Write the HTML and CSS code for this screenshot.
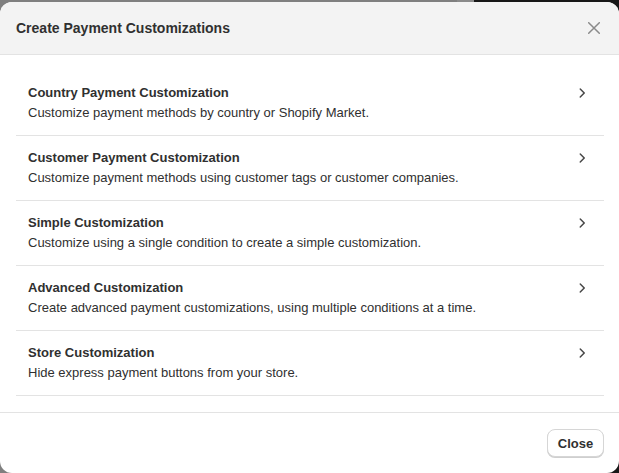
FILE: index.html
```html
<!DOCTYPE html>
<html>
<head>
<meta charset="utf-8">
<link rel="stylesheet" href="styles.css">
</head>
<body>
<div class="modal">
  <div class="modal-header">
    <h2 class="modal-title">Create Payment Customizations</h2>
    <button class="icon-btn" aria-label="Close">
      <svg width="12" height="12" viewBox="0 0 12 12"><path d="M0.7 0.7L11.3 11.3M11.3 0.7L0.7 11.3" stroke="#8a8a8a" stroke-width="1.5" stroke-linecap="round" fill="none"/></svg>
    </button>
  </div>
  <div class="modal-body">
    <ul class="options">
      <li class="option">
        <div class="option-text">
          <div class="option-title">Country Payment Customization</div>
          <div class="option-desc">Customize payment methods by country or Shopify Market.</div>
        </div>
        <svg class="chev" width="20" height="20" viewBox="0 0 20 20"><path d="M7.72 14.53a.75.75 0 0 1 0-1.06l3.47-3.47-3.47-3.470a.75.75 0 0 1 1.06-1.06l4 4a.75.75 0 0 1 0 1.06l-4 4a.75.75 0 0 1-1.06 0Z" fill="#4a4a4a"/></svg>
      </li>
      <li class="option">
        <div class="option-text">
          <div class="option-title">Customer Payment Customization</div>
          <div class="option-desc">Customize payment methods using customer tags or customer companies.</div>
        </div>
        <svg class="chev" width="20" height="20" viewBox="0 0 20 20"><path d="M7.72 14.53a.75.75 0 0 1 0-1.06l3.47-3.47-3.47-3.47a.75.75 0 0 1 1.06-1.06l4 4a.75.75 0 0 1 0 1.06l-4 4a.75.75 0 0 1-1.06 0Z" fill="#4a4a4a"/></svg>
      </li>
      <li class="option">
        <div class="option-text">
          <div class="option-title">Simple Customization</div>
          <div class="option-desc">Customize using a single condition to create a simple customization.</div>
        </div>
        <svg class="chev" width="20" height="20" viewBox="0 0 20 20"><path d="M7.72 14.53a.75.75 0 0 1 0-1.06l3.47-3.47-3.47-3.47a.75.75 0 0 1 1.06-1.06l4 4a.75.75 0 0 1 0 1.06l-4 4a.75.75 0 0 1-1.06 0Z" fill="#4a4a4a"/></svg>
      </li>
      <li class="option">
        <div class="option-text">
          <div class="option-title">Advanced Customization</div>
          <div class="option-desc">Create advanced payment customizations, using multiple conditions at a time.</div>
        </div>
        <svg class="chev" width="20" height="20" viewBox="0 0 20 20"><path d="M7.72 14.53a.75.75 0 0 1 0-1.06l3.47-3.47-3.47-3.47a.75.75 0 0 1 1.06-1.06l4 4a.75.75 0 0 1 0 1.06l-4 4a.75.75 0 0 1-1.06 0Z" fill="#4a4a4a"/></svg>
      </li>
      <li class="option">
        <div class="option-text">
          <div class="option-title">Store Customization</div>
          <div class="option-desc">Hide express payment buttons from your store.</div>
        </div>
        <svg class="chev" width="20" height="20" viewBox="0 0 20 20"><path d="M7.72 14.53a.75.75 0 0 1 0-1.06l3.47-3.47-3.47-3.47a.75.75 0 0 1 1.06-1.06l4 4a.75.75 0 0 1 0 1.06l-4 4a.75.75 0 0 1-1.06 0Z" fill="#4a4a4a"/></svg>
      </li>
    </ul>
  </div>
  <div class="modal-footer">
    <button class="btn">Close</button>
  </div>
</div>
</body>
</html>
```
FILE: styles.css
```css
html, body {
  margin: 0;
  padding: 0;
  height: 100%;
}
body {
  background: linear-gradient(to right, #7f7f7f 0, #7f7f7f 457px, #8a8a8a 457px, #8a8a8a 474px, #171717 474px);
  font-family: "Liberation Sans", Arial, sans-serif;
  color: #303030;
  overflow: hidden;
}
.modal {
  margin-top: 2px;
  height: 471px;
  background: #ffffff;
  border-radius: 12px;
  display: flex;
  flex-direction: column;
  overflow: hidden;
}
.modal-header {
  height: 52px;
  background: #f3f3f3;
  border-bottom: 1px solid #e3e3e3;
  display: flex;
  align-items: center;
  justify-content: space-between;
  padding: 0 19px 0 16px;
}
.modal-title {
  margin: 0;
  font-size: 14px;
  font-weight: 700;
  color: #303030;
}
.icon-btn {
  background: none;
  border: 0;
  padding: 0;
  width: 12px;
  height: 12px;
  display: flex;
}
.modal-body {
  flex: 1;
  padding: 16px 15px 16px 16px;
}
.options {
  list-style: none;
  margin: 0;
  padding: 0;
}
.option {
  display: flex;
  align-items: flex-start;
  justify-content: space-between;
  padding: 12px;
  border-bottom: 1px solid #e3e3e3;
}
.option-title {
  font-size: 13px;
  font-weight: 700;
  line-height: 20px;
}
.option-desc {
  font-size: 13px;
  line-height: 20px;
}
.chev {
  flex: none;
  margin-top: 0;
  margin-right: 0;
}
.modal-footer {
  border-top: 1px solid #e3e3e3;
  padding: 16px 15px 16px 16px;
  display: flex;
  justify-content: flex-end;
}
.btn {
  height: 28px;
  width: 57px;
  padding: 0;
  font-family: "Liberation Sans", Arial, sans-serif;
  font-size: 13px;
  font-weight: 700;
  color: #303030;
  background: #ffffff;
  border: 1px solid #d6d6d6;
  border-radius: 8px;
  box-shadow: 0 1px 0 #cfcfcf;
}
```
